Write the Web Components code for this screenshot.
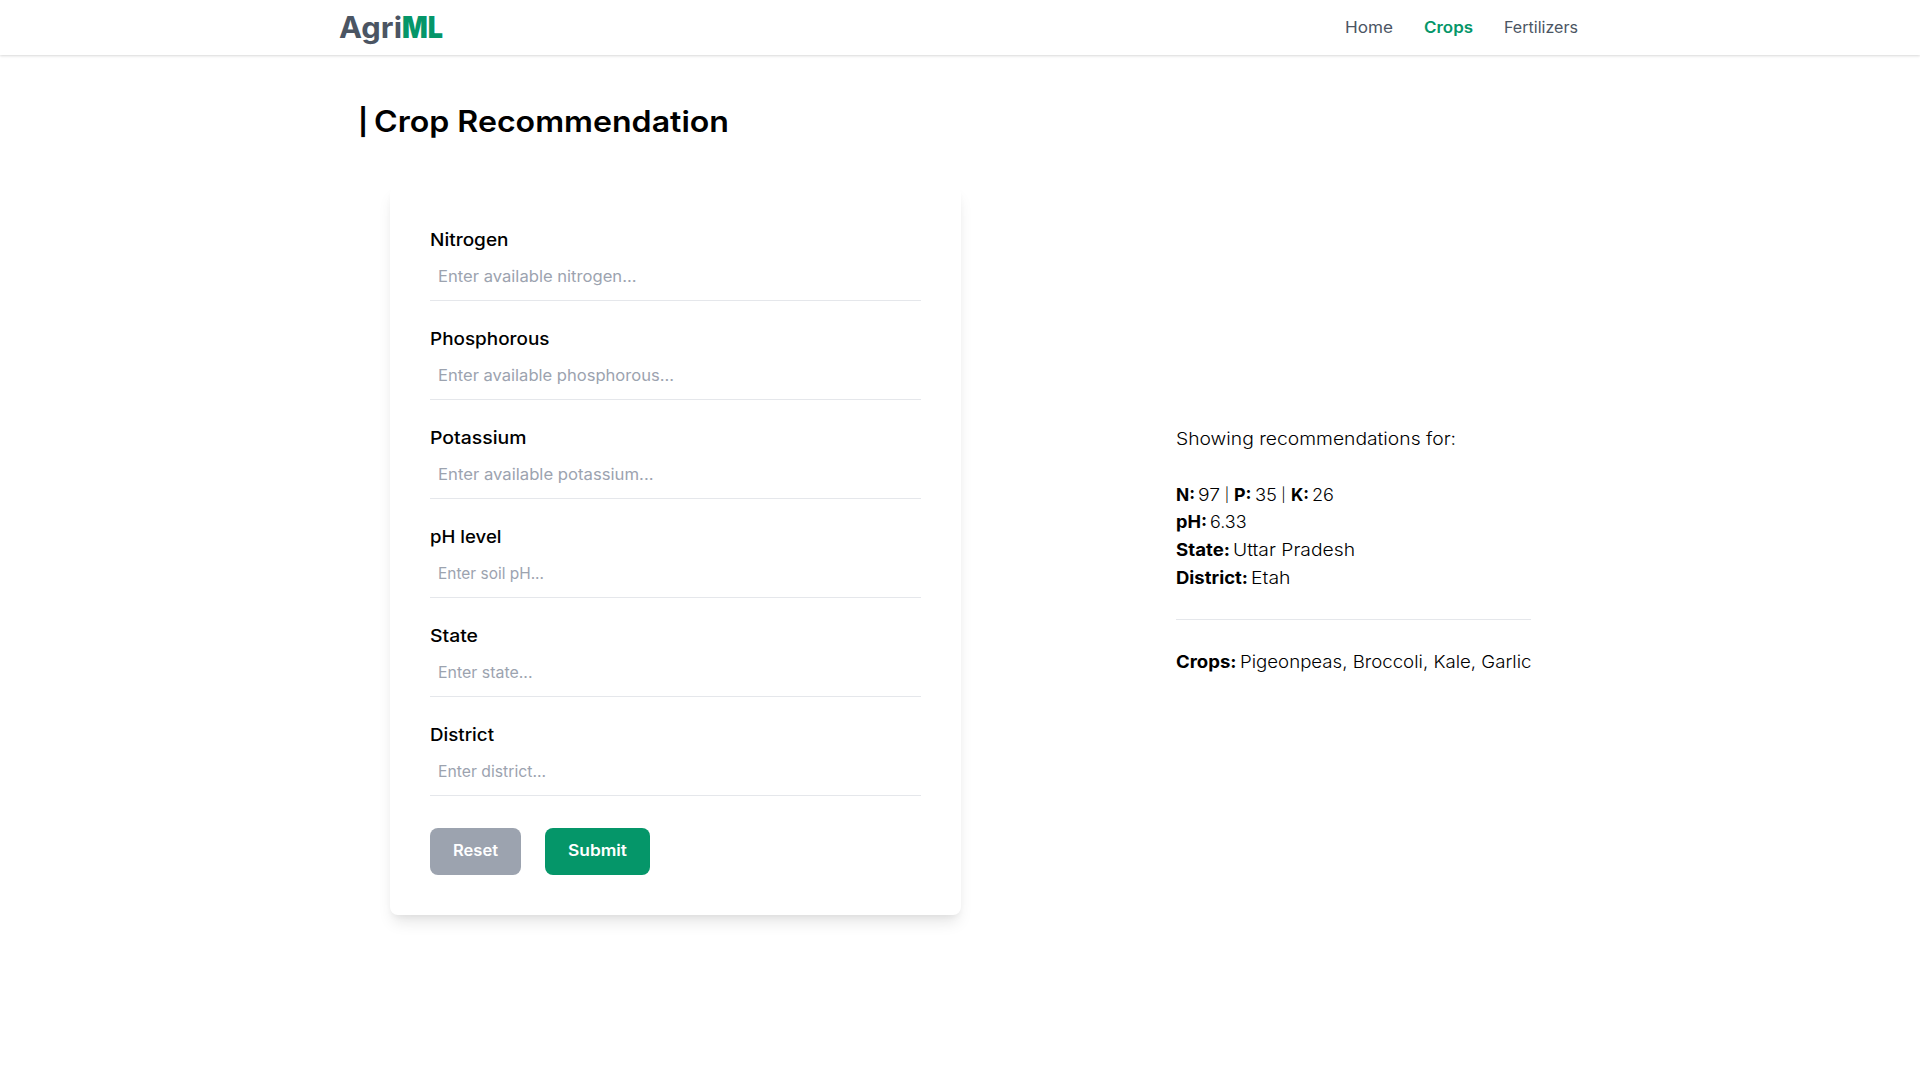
<!DOCTYPE html>
<html lang="en">
<head>
<meta charset="utf-8">
<title>AgriML</title>
<style>
html, body { margin: 0; height: 100%; background: #fff; overflow: hidden; }
body { font-family: Inter, "Open Sans", sans-serif; color: #000; }
</style>
</head>
<body>
<agri-app></agri-app>
<script>
// A run of text widened so that it fills a given advance width.
class TextRun extends HTMLElement {
  constructor() {
    super();
    this.attachShadow({ mode: "open" }).innerHTML =
      `<style>:host{display:inline-block;white-space:pre;text-align:left}span{display:inline-block;vertical-align:top;transform-origin:0 50%}</style><span></span>`;
  }
  connectedCallback() {
    const span = this.shadowRoot.querySelector("span");
    const text = this.getAttribute("text");
    const width = Number(this.getAttribute("width"));
    span.textContent = text;
    const natural = span.getBoundingClientRect().width;
    span.style.transform = `scaleX(${width / natural})`;
    this.style.width = width + "px";
  }
}
customElements.define("text-run", TextRun);

class SiteHeader extends HTMLElement {
  constructor() {
    super();
    this.attachShadow({ mode: "open" }).innerHTML = `<style>
      :host{display:block;height:55px;background:#fff;box-shadow:0 1px 3px rgba(0,0,0,.1),0 1px 2px rgba(0,0,0,.06)}
      nav{display:flex;align-items:center;justify-content:space-between;height:55px;padding:0 342px 0 339px}
      .logo{display:flex;height:37px;font-size:29.5px;font-weight:700;color:#4b5563}
      .logo b{color:#059669}
      .links{display:flex;gap:31px;font-size:15.5px;font-weight:430;color:#4b5563;line-height:20px;padding-top:1px}
      .on{color:#059669;font-weight:640}
    </style><nav><div class="logo"><text-run text="Agri" width="63"></text-run><b><text-run text="ML" width="41"></text-run></b></div>
    <div class="links"><text-run text="Home" width="48"></text-run><text-run class="on" text="Crops" width="49"></text-run><text-run text="Fertilizers" width="74"></text-run></div></nav>`;
  }
}
customElements.define("site-header", SiteHeader);

class FormField extends HTMLElement {
  constructor() { super(); this.attachShadow({ mode: "open" }); }
  connectedCallback() {
    const a = n => this.getAttribute(n);
    this.shadowRoot.innerHTML = `<style>
      :host{display:block}
      .label{font-size:17.5px;font-weight:550;line-height:27px;height:27px}
      .input{height:47px;line-height:47px;padding-left:8px;font-size:15.5px;color:#9ca3af;border-bottom:1px solid #e5e7eb}
    </style><div class="label"><text-run text="${a("label")}" width="${a("lw")}"></text-run></div>
    <div class="input"><text-run text="${a("hint")}" width="${a("hw")}"></text-run></div>`;
  }
}
customElements.define("form-field", FormField);

class FormButton extends HTMLElement {
  constructor() {
    super();
    this.attachShadow({ mode: "open" }).innerHTML = `<style>
      :host{display:block}
      div{box-sizing:border-box;height:47px;line-height:46px;padding:0 23px;border-radius:8px;background:var(--fill);color:#fff;font-size:15.5px;font-weight:600}
    </style><div><slot></slot></div>`;
  }
}
customElements.define("form-button", FormButton);

class CropForm extends HTMLElement {
  constructor() {
    super();
    this.attachShadow({ mode: "open" }).innerHTML = `<style>
      :host{display:flex;flex-direction:column;gap:24px;box-sizing:border-box;width:571px;padding:40px;border-radius:8px;background:#fff;
        box-shadow:0 10px 15px -3px rgba(0,0,0,.1),0 4px 6px -2px rgba(0,0,0,.05)}
      .actions{display:flex;gap:24px;margin-top:8px}
    </style>
    <form-field label="Nitrogen" lw="78.5" hint="Enter available nitrogen..." hw="198.5"></form-field>
    <form-field label="Phosphorous" lw="119.5" hint="Enter available phosphorous..." hw="236"></form-field>
    <form-field label="Potassium" lw="96.5" hint="Enter available potassium..." hw="215.5"></form-field>
    <form-field label="pH level" lw="71.5" hint="Enter soil pH..." hw="106"></form-field>
    <form-field label="State" lw="48" hint="Enter state..." hw="94.5"></form-field>
    <form-field label="District" lw="64" hint="Enter district..." hw="108"></form-field>
    <div class="actions">
      <form-button style="--fill:#9ca3af"><text-run text="Reset" width="45"></text-run></form-button>
      <form-button style="--fill:#059669"><text-run text="Submit" width="59"></text-run></form-button>
    </div>`;
  }
}
customElements.define("crop-form", CropForm);

class CropResult extends HTMLElement {
  constructor() {
    super();
    this.attachShadow({ mode: "open" }).innerHTML = `<style>
      :host{display:block;width:355px;font-size:17.5px;font-weight:300;line-height:27.75px}
      .row{display:flex;gap:3px;height:27.75px}
      b{font-weight:650;display:flex}
      i{font-style:normal;font-size:14px;width:8px;text-align:center}
      .intro{margin-bottom:27.75px}
      hr{border:0;height:1px;background:#e5e7eb;margin:27.75px 0}
    </style>
    <div class="row intro"><text-run text="Showing recommendations for:" width="280"></text-run></div>
    <div class="row"><b><text-run text="N:" width="19"></text-run></b><text-run text="97" width="22"></text-run><i>|</i><b><text-run text="P:" width="17.5"></text-run></b><text-run text="35" width="22"></text-run><i>|</i><b><text-run text="K:" width="18"></text-run></b><text-run text="26" width="22"></text-run></div>
    <div class="row"><b><text-run text="pH:" width="31"></text-run></b><text-run text="6.33" width="36.5"></text-run></div>
    <div class="row"><b><text-run text="State:" width="54"></text-run></b><text-run text="Uttar Pradesh" width="122"></text-run></div>
    <div class="row"><b><text-run text="District:" width="72"></text-run></b><text-run text="Etah" width="39.5"></text-run></div>
    <hr>
    <div class="row"><b><text-run text="Crops:" width="60.5"></text-run></b><text-run text="Pigeonpeas, Broccoli, Kale, Garlic" width="291.5"></text-run></div>`;
  }
}
customElements.define("crop-result", CropResult);

class AgriApp extends HTMLElement {
  constructor() {
    super();
    this.attachShadow({ mode: "open" }).innerHTML = `<style>
      :host{display:block}
      h1{display:flex;align-items:center;gap:9px;margin:44px 0 42px 361px;height:45px;font-size:29.5px;font-weight:570;line-height:45px}
      .bar{width:4px;display:flex;justify-content:center;font-size:26px;font-weight:700}
      main{display:flex;align-items:center;gap:215px;padding-left:390px}
    </style>
    <site-header></site-header>
    <h1><span class="bar">|</span><text-run text="Crop Recommendation" width="355"></text-run></h1>
    <main><crop-form></crop-form><crop-result></crop-result></main>`;
  }
}
customElements.define("agri-app", AgriApp);
</script>
</body>
</html>
